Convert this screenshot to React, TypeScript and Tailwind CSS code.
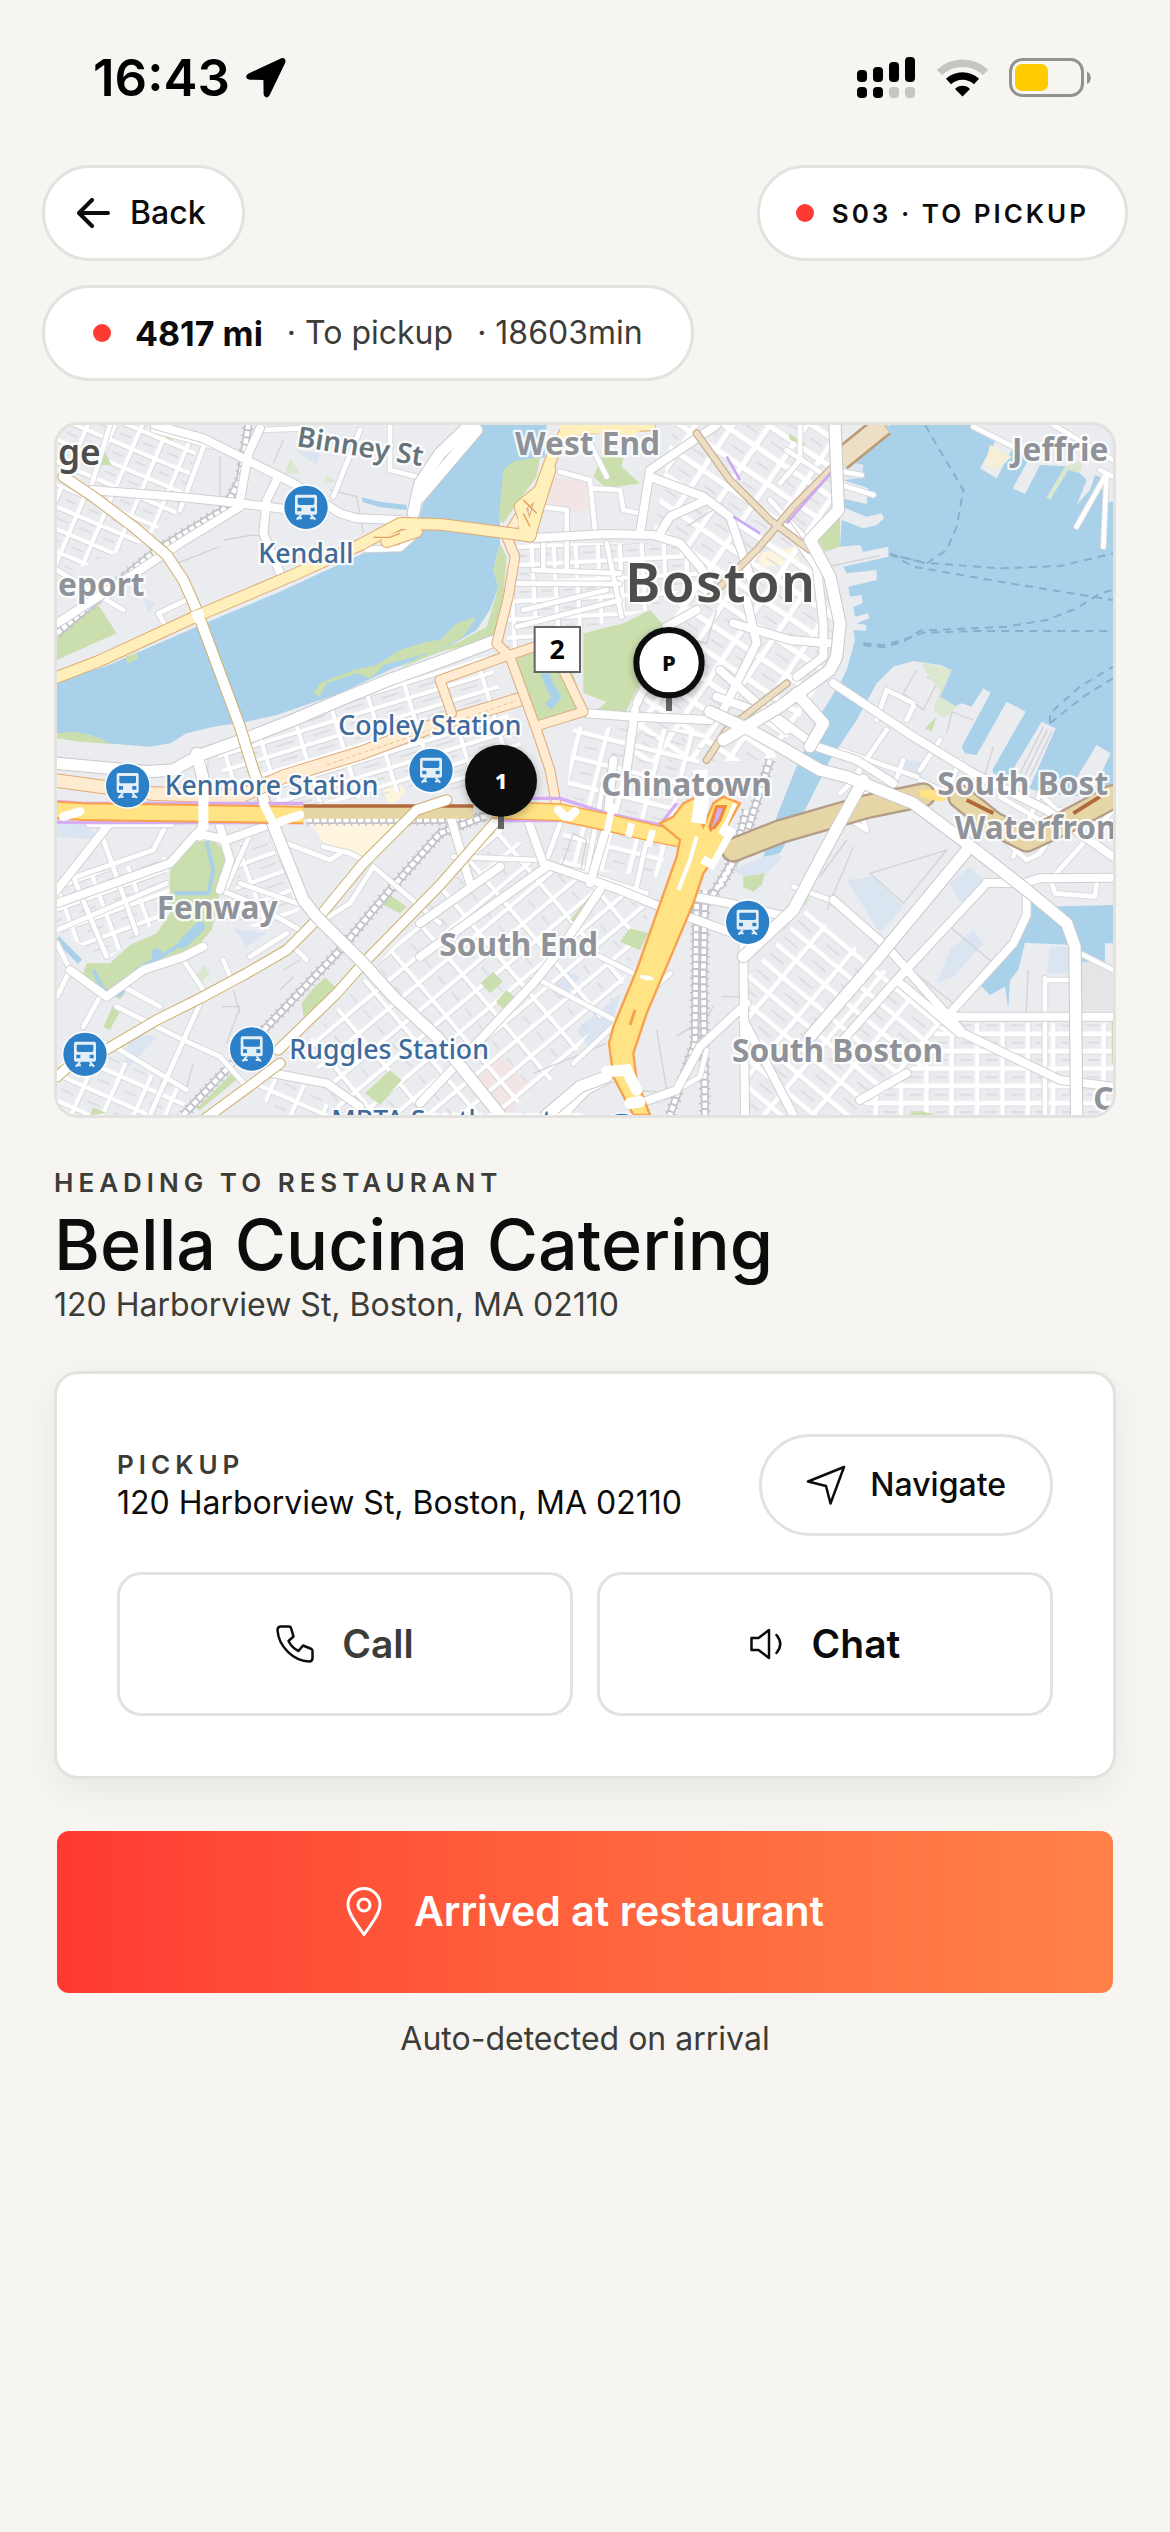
/**
 * Driver trip screen: heading to pickup
 *
 * Status bar, trip pills, live map, restaurant details
 * and the "arrived" action.
 */

import type { ReactNode } from 'react'

interface Label {
  text: string
  x: number
  y: number
  rotate?: number
}

interface RoadProps {
  paths: string[]
  width: number
  color: string
  casing?: string
  casingWidth?: number
}

const WATER = '#a9d1ea'
const PARK = '#cbdfae'
const BUILT = '#dae5f1'

/* ---------- Map data (map units, 3 per pixel) ---------- */

const water = [
  // Charles River
  'M51 815L110 795 200 768 470 650 720 545 970 430 1070 420 1120 385 1150 280 1200 210 1310 45H1520L1515 140 1400 180 1380 320 1380 400 1360 480 1375 530 1350 600 1310 660 1200 725 1060 775 900 850 710 915 620 935 520 950 440 970 390 1000 330 1010 200 1000 150 975 51 970Z',
  // Inner harbor and channel
  'M2550 45H3219V1165L3070 1155 2980 1140 2860 1090 2857 1080 2957 905 2900 875 2810 1035 2775 1030 2765 1010 2852 848 2830 835 2795 890 2765 880 2745 890 2700 860 2735 780 2700 765 2620 753 2560 770 2510 820 2450 930 2370 1050 2300 1190 2220 1330 2170 1340 2210 1220 2265 1080 2350 900 2400 820 2420 780 2445 690 2440 660 2478 662 2478 645 2450 640 2488 625 2485 610 2445 620 2440 590 2468 580 2465 555 2430 560 2425 530 2510 510 2510 480 2420 490 2410 470 2545 440 2545 410 2470 425 2460 405 2400 410 2405 330 2470 355 2510 345 2532 325 2525 310 2480 320 2405 290 2405 265 2480 282 2485 235 2410 210 2465 205 2470 165 2410 150Z',
  // Reserved Channel
  'M2955 1470L3010 1490 3219 1485V1600H3195V1655L3120 1655 3100 1605 2955 1598 2935 1680 2910 1710 2905 1795 2895 1730 2850 1755 2815 1720 2910 1600 2960 1515Z',
  'M870 1462L955 1368 978 1378 886 1474Z',
  'M965 262L1020 275 1100 285V300L1020 292 968 276Z',
  'M1950 1485L1968 1480 1960 1520 1940 1515Z',
]

const parks = [
  'M51 660L175 585 230 670 51 750Z',
  'M255 740L290 730 295 745 262 762Z',
  'M51 970L110 965 180 985 210 1002 120 995 51 985Z',
  'M1390 180L1420 155 1500 140 1490 200 1430 280 1390 340 1376 330Z',
  'M1380 400L1400 440 1390 560 1365 680 1310 700 1200 725 1080 775 1140 740 1250 700 1340 650 1355 600 1375 530 1360 480Z',
  'M820 850L840 820 940 780 1010 765 1080 720 1160 695 1200 690 1250 640 1310 620 1270 680 1200 720 1030 765 1010 790 990 805 950 790 860 820 840 858Z',
  'M1630 670L1750 640 1830 600 1880 655 1780 860 1755 910 1670 900 1700 875 1630 850Z',
  'M1425 740L1570 700 1635 900 1495 935Z',
  'M1690 130L1750 145 1745 170 1800 220 1700 235 1660 200Z',
  'M390 1430V1390L400 1350 460 1295 520 1290 555 1325 560 1380 540 1450 515 1560 470 1610 310 1680 240 1768 190 1745 130 1690 140 1660 210 1660 270 1605 350 1570 390 1510Z',
  'M220 1785L245 1795 210 1860 190 1850Z',
  'M855 1702L890 1735 790 1820 785 1780 815 1740Z',
  'M1050 1455L1100 1490 1080 1510 1020 1480Z',
  'M580 1985L595 2005 480 2100 470 2095Z',
  'M1050 1980L1085 2010 1020 2085 975 2050Z',
  'M1660 1445L1685 1460 1610 1540 1590 1530Z',
  'M1770 1555L1825 1570 1800 1620 1740 1595Z',
  'M1360 1685L1388 1715 1350 1750 1322 1720Z',
  'M1400 1740L1432 1768 1395 1803 1368 1775Z',
  'M2330 385L2400 320V410L2355 425Z',
  'M2655 955L2690 920 2675 965Z',
  'M2110 1400L2175 1390 2165 1425 2140 1445 2110 1430Z',
  'M345 50L400 85 395 92 340 65ZM195 125L215 165 180 165Z',
  'M2245 70L2290 95 2300 110 2250 90Z',
  'M3215 1815H3219V1960H3215Z',
  'M2600 2115L2640 2102 2690 2115Z',
  'M150 2115L160 2092 200 2110Z',
]

const paleParks = [
  'M2645 755L2735 780 2700 860 2750 890 2710 925 2680 900 2700 840 2660 790Z',
  'M3075 170L3130 150 3120 190 3085 180 3030 270 3020 262Z',
  'M750 145L780 190 735 190Z M860 195L888 215 850 220Z',
  'M490 1665L510 1690 485 1715 470 1695Z',
  'M2290 1445L2320 1445 2300 1485 2285 1490Z',
]

const builtBlocks = [
  'M765 120L840 130 830 165Z',
  'M310 565L345 580 325 610Z',
  'M2080 1380L2190 1330 2230 1340 2170 1400 2110 1400Z',
  'M2420 1410L2500 1400 2590 1490 2520 1570Z',
  'M2730 1420L2790 1370 2840 1420 2780 1500 2740 1440Z',
  'M2730 1620L2800 1560 2830 1600 2740 1700 2690 1720Z',
  'M580 1555L680 1570 620 1610Z',
  'M270 1870L350 1880 270 1970 250 1960Z',
  'M1610 1860L1740 1750 1720 1830 1650 1920Z',
  'M3030 1610L3090 1610V1690H3020Z',
  'M2410 140L2470 170 2455 210 2405 200Z',
  'M1570 1680L1620 1700 1570 1770 1540 1740Z',
  'M51 1240L130 1240 190 1290 51 1280Z',
  'M2600 1050L2660 1060 2640 1110 2590 1090Z',
]

const hospital = [
  'M1540 200L1650 220 1650 300 1600 305 1500 280Z',
  'M1760 1080L1860 1075 1840 1140 1770 1120Z',
  'M1370 1920L1470 2030 1410 2115 1290 2050Z',
]

const sand = [
  'M810 1240L870 1210 1110 1210 970 1340 920 1320 860 1310Z',
  'M1030 1140L1070 1115 1100 1145 1050 1190Z',
  'M2145 430L2270 410 2275 460 2170 470Z',
  'M2850 105L2915 140 2870 180 2835 165Z',
]

// Areas with a regular street grid; each one is filled with a rotated pattern
const gridAreas = [
  { fill: 'url(#grid-cambridge)', d: 'M51 45H345L480 80 420 300 320 380 150 240 51 170Z' },
  { fill: 'url(#grid-cambridge)', d: 'M51 220L160 270 320 390 100 480 51 470Z' },
  { fill: 'url(#grid-backbay)', d: 'M520 1000L1340 735 1400 900 1480 1100 1320 1150 1180 1130 640 1210 560 1120Z' },
  { fill: 'url(#grid-beacon)', d: 'M1420 400H1900L1980 500 1840 595 1620 660 1400 720Z' },
  { fill: 'url(#grid-downtown)', d: 'M1900 45H2380L2390 300 2310 390 2390 640 2350 800 2200 1050 1780 1060 1790 860 1880 650 1980 480 1840 380Z' },
  { fill: 'url(#grid-southend)', d: 'M1370 1250L1500 1340 1700 1430 1830 1500 1740 1740 1560 1990 1380 2115 900 2115 800 1900 1000 1680Z' },
  { fill: 'url(#grid-fens)', d: 'M51 1420L380 1340 390 1500 200 1650 51 1560Z' },
  { fill: 'url(#grid-fens)', d: 'M600 1300L740 1290 800 1480 700 1560 580 1540Z' },
  { fill: 'url(#grid-roxbury)', d: 'M51 1960L200 1930 440 2050 430 2115H51ZM640 2010L760 2000 900 2115H700Z' },
  { fill: 'url(#grid-southie)', d: 'M2120 1700L2300 1500 2740 1840 2640 1980 2430 2115H2130Z' },
  { fill: 'url(#grid-straight)', d: 'M2700 1840H3219V2115H2480V2040L2640 1960Z' },
  { fill: 'url(#grid-chinatown)', d: 'M1600 950L2000 960 1960 1130 1850 1400 1560 1370Z' },
]

const streets = [
  'M660 60L790 55M960 60L880 260M51 480L250 600M340 60L520 110M210 45L150 240M420 300L500 85',
  'M355 610L450 565M355 610L372 640M1050 45V180L1130 200',
  'M2280 45V150L2220 220M2240 120L2360 200M2190 270L2310 400',
  'M1700 200L1650 100 1560 90M1560 185L1650 210 1665 360M1500 290L1580 300V370M1660 235L1740 240 1750 300 1800 310',
  'M1480 480L1740 490M1420 520L1740 522M1510 400V480M1580 390V480M1700 400L1745 620M1450 600L1700 540M1430 650L1740 570',
  'M51 1560L380 1420M100 1400L200 1640M180 1260L290 1570M110 1400L340 1320 380 1240M51 1760L90 1680 51 1600',
  'M380 1240L460 1230M640 1250L560 1430M700 1290L780 1470M740 1300L870 1350 900 1330M850 1310L930 1330 970 1350',
  'M540 1440L640 1480 780 1560M600 1420L800 1490M630 1640L740 1570M550 1650L570 1700M130 1870L240 1920 440 2040M430 1650L490 1740',
  'M480 1780L330 2115M230 1790L430 1890 540 1940 620 2030M130 1850L180 1760M250 1730L360 1790',
  'M850 1530L930 1480 1000 1370M1000 1370L1200 1540M770 1620L800 1650',
  'M1240 1340L1500 1350M1560 1240L1520 1350M1690 1120L1640 1390M1830 1250L1780 1470M1600 1380L1820 1450',
  'M1600 1960L1890 1690M1480 1700L1760 1850M1580 1590L1780 1690M1860 2070L1980 2000 2000 1920',
  'M2400 1210L2480 1260 2460 1200M2500 1120L2360 1300M2260 1430L2370 1470 2540 1610',
  'M2540 960L2450 1090M2400 1150L2460 1090M2620 880L2540 840 2510 930M2620 890L2600 930M2700 990L2640 1080',
  'M2590 1050L2560 1130M2760 1050L2720 1150 2640 1110M2880 1160L3000 1230 3060 1200',
  'M2920 1340L3000 1150 3050 1200M3040 1400L3219 1200M2840 1240L2960 1350 3000 1330 3070 1220',
  'M3030 1400L3045 1450 3165 1460 3170 1420M3015 1710H3110M3015 1705V2115M3120 1630L3219 1680',
  'M2630 1100L2400 1020M2405 185L2465 195M2405 225L2500 255',
  'M3110 350L3200 190 3190 410M3180 180L3219 200M2800 50L2920 110M3040 45L3219 150',
]

const avenues = [
  'M345 45L490 85 620 150 760 220 900 310 950 325 1080 330',
  'M150 240L430 262 600 280 740 298',
  'M660 55L625 130 600 270',
  'M51 640L270 500 420 400 600 290',
  'M710 210L680 270 670 370 720 490',
  'M1470 385L1700 372 1840 375 1920 400 1980 470 2010 520',
  'M1800 370L1830 180 2030 45',
  'M1830 200L1990 260 2070 320 2110 440 2150 560',
  'M1860 370L1890 320 2000 270',
  'M1880 650L1970 600M1790 880L1880 700',
  'M1640 910L1780 920 2010 930',
  'M1760 1080L1785 900',
  'M2080 640L2250 690 2370 700',
  'M2040 780L2240 960',
  'M2120 570L2150 700 2050 900',
  'M2030 860L2220 930 2330 1010 2450 1050 2560 1120',
  'M2230 330L2330 470 2350 640 2350 740 2270 800',
  'M240 1200L51 1440',
  'M51 1480L390 1360 470 1270 560 1290 700 1240 840 1190',
  'M490 1040V1210L480 1280M540 1250L570 1350 540 1440',
  'M150 1240H390',
  'M1220 1180L1290 1420M1460 1220L1510 1360 1740 1440 1860 1490 2080 1570',
  'M1960 1460L2070 1480 2240 1520M2110 1610L2115 2115',
  'M1720 1050L1700 1250 1650 1420',
  'M90 1680L200 1760 310 1680 430 1640 490 1610',
  'M1140 2080L1480 1720 1560 1620 1680 1440',
  'M1140 1540L1380 1370M1140 1640L1520 1370',
  'M2380 820L2620 980 2800 1090 3020 1200 3219 1340',
  'M2220 1550L2280 1460 2350 1330 2470 1120',
  'M2840 1420L2570 1710 2400 1900',
  'M2960 1450L2960 1515 2920 1600 2720 1820H3219',
  'M2840 1418L2950 1420 3000 1405 3219 1403',
  'M2380 1470L2540 1610 2770 1870 3060 2010 3219 2030',
  'M2570 1710L2760 1870',
  'M1570 2115L1640 2040 1700 2010 1750 1985 1770 1985',
  'M1800 2080L1910 2040 1980 1910 2120 1780',
  'M2110 1830L2200 2000 2260 2115M2460 2070L2600 1990',
  'M700 1990L860 2020 960 2090',
]

const majors = [
  'M1120 310L1140 220 1200 130 1290 45',
  'M1140 260L1310 60',
  'M51 1060L320 1085 400 1080 480 1035 620 985 760 930 900 870 1060 805 1200 755 1370 690',
  'M470 1030L490 1110',
  'M2010 905L2130 960 2220 1010 2340 1080 2420 1100 2620 1180 2780 1300 2960 1440 3080 1540 3105 1610 3110 2115',
  'M2385 45L2395 300 2310 390 2370 500 2400 640 2390 740 2370 780 2220 890 2050 990',
  'M2270 850L2350 940 2310 1010',
  'M2790 1310L2500 1660 2310 1880',
  'M2470 1110L2350 1330 2260 1500 2110 1640',
  'M1700 2000L1620 2030 1520 2115',
]

const rails = [
  'M51 670L350 420 550 300 600 210 625 45',
  'M800 1230H1200L1340 1220',
  'M430 2115L700 1830 900 1620 1050 1440 1200 1270 1330 1220',
  'M1970 1460L1965 1900 1890 2115',
  'M1995 1440L1990 1700 1995 2115',
  'M2120 1200L2080 1350 2010 1470M2190 1050L2110 1300 2040 1430',
]

const ferries = [
  'M2655 45L2770 240 2750 350 2720 420 2660 460 2550 432',
  'M2550 432L2650 458 2880 475 3060 468 3219 430',
  'M2550 432L2620 470 2940 525 3219 570',
  'M2470 705L2530 712 2590 695 2640 662 2900 650 3020 630 3110 595 3180 550 3219 540',
  'M2470 700L2530 705 2590 690 2650 668 2800 663H3219',
  'M3030 940L3030 910 3120 830 3219 770M3030 940L3130 860 3219 805',
]

const districts: Label[] = [
  { text: 'West End', x: 1425, y: 134 },
  { text: 'Jeffrie', x: 2916, y: 152 },
  { text: 'eport', x: 54, y: 558 },
  { text: 'Chinatown', x: 1684, y: 1158 },
  { text: 'Fenway', x: 350, y: 1528 },
  { text: 'South End', x: 1198, y: 1638 },
  { text: 'South Boston', x: 2076, y: 1956 },
  { text: 'South Bost', x: 2692, y: 1154 },
  { text: 'Waterfron', x: 2744, y: 1288 },
  { text: 'C', x: 3160, y: 2100 },
]

const stationLabels: Label[] = [
  { text: 'Kendall', x: 655, y: 460 },
  { text: 'Copley Station', x: 895, y: 975 },
  { text: 'Kenmore Station', x: 374, y: 1156 },
  { text: 'Ruggles Station', x: 748, y: 1946 },
  { text: 'MBTA Southampton', x: 874, y: 2160 },
]

const stations = [
  [798, 292],
  [263, 1127],
  [1173, 1081],
  [135, 1933],
  [635, 1917],
  [2123, 1537],
  [1745, 2176],
]

/* ---------- Map pieces ---------- */

function Shapes({ paths, fill }: { paths: string[]; fill: string }) {
  return (
    <g fill={fill}>
      {paths.map((d) => (
        <path key={d} d={d} />
      ))}
    </g>
  )
}

/** Draws the casing of every road first so that junctions stay open */
function Roads({ paths, width, color, casing, casingWidth = 6 }: RoadProps) {
  return (
    <g fill="none" strokeLinejoin="round" strokeLinecap="round">
      {casing &&
        paths.map((d) => <path key={`c${d}`} d={d} stroke={casing} strokeWidth={width + casingWidth} />)}
      {paths.map((d) => (
        <path key={d} d={d} stroke={color} strokeWidth={width} />
      ))}
    </g>
  )
}

function GridPattern({ id, w, h, angle, line = 13 }: { id: string; w: number; h: number; angle: number; line?: number }) {
  return (
    <pattern id={id} width={w} height={h} patternUnits="userSpaceOnUse" patternTransform={`rotate(${angle})`}>
      <path d={`M${w / 3} ${h / 2}H${w * 0.8}`} stroke="#d6d7da" strokeWidth="4" />
      <path d={`M0 0H${w}M0 0V${h}`} stroke="#d3d4d7" strokeWidth={line * 2 + 5} />
      <path d={`M0 0H${w}M0 0V${h}M0 ${h}H${w}M${w} 0V${h}`} stroke="#fff" strokeWidth={line * 2} />
    </pattern>
  )
}

function MapLabels({ labels, size, weight, color, spacing }: { labels: Label[]; size: number; weight: number; color: string; spacing?: number }) {
  return (
    <g
      fontFamily="'Noto Sans', sans-serif"
      fontSize={size}
      fontWeight={weight}
      fill={color}
      stroke="#fff"
      strokeOpacity="0.85"
      strokeWidth="14"
      strokeLinejoin="round"
      paintOrder="stroke"
      letterSpacing={spacing}
    >
      {labels.map(({ text, x, y, rotate = 0 }) => (
        <text key={`${text}${x}`} x={x} y={y} transform={`rotate(${rotate} ${x} ${y})`}>
          {text}
        </text>
      ))}
    </g>
  )
}

function Station({ x, y }: { x: number; y: number }) {
  return (
    <g transform={`translate(${x} ${y})`}>
      <circle r="70" fill="#fff" fillOpacity="0.8" />
      <circle r="65" fill="#2b80c8" />
      <path
        fillRule="evenodd"
        fill="#e4eff8"
        d="M-28-38H28Q33-38 33-32V16Q33 22 27 22H-27Q-33 22-33 16V-32Q-33-38-28-38ZM-25-29V-12Q-25-7-20-7H20Q25-7 25-12V-29ZM-26 1V12H-14V1ZM14 1V12H26V1Z"
      />
      <path d="M-14 22L-28 37M14 22L28 37M-24 33H-12M12 33H24" stroke="#e4eff8" strokeWidth="6" />
    </g>
  )
}

function TripMap() {
  return (
    <svg
      viewBox="51 45 3168 2070"
      preserveAspectRatio="xMidYMid slice"
      className="block w-full"
      role="img"
      aria-label="Map of Boston"
    >
      <defs>
        <GridPattern id="grid-cambridge" w={75} h={62} angle={23} line={6} />
        <GridPattern id="grid-backbay" w={115} h={46} angle={-17} line={6} />
        <GridPattern id="grid-beacon" w={66} h={54} angle={-3} line={6} />
        <GridPattern id="grid-downtown" w={92} h={74} angle={34} line={8} />
        <GridPattern id="grid-southend" w={64} h={118} angle={50} line={6} />
        <GridPattern id="grid-fens" w={110} h={62} angle={-20} line={6} />
        <GridPattern id="grid-roxbury" w={86} h={72} angle={24} line={6} />
        <GridPattern id="grid-southie" w={112} h={64} angle={40} line={7} />
        <GridPattern id="grid-straight" w={76} h={52} angle={0} line={7} />
        <GridPattern id="grid-chinatown" w={82} h={78} angle={14} line={7} />
        <filter id="pin-shadow" x="-50%" y="-50%" width="200%" height="200%">
          <feDropShadow dx="0" dy="8" stdDeviation="12" floodOpacity="0.3" />
        </filter>
      </defs>

      <rect x="51" y="45" width="3168" height="2070" fill="#ebecf0" />
      <Shapes paths={builtBlocks} fill={BUILT} />
      <Shapes paths={sand} fill="#fdf5dd" />
      <Shapes paths={hospital} fill="#f2e5e5" />
      {gridAreas.map(({ fill, d }) => (
        <path key={d} d={d} fill={fill} />
      ))}

      <Shapes paths={water} fill={WATER} />
      <path d="M3120 1655L3219 1660V1800H3120Z" fill="#e4e5e7" />

      {/* East Boston shore and the piers */}
      <g fill="#ebecf0">
        <path d="M2795 45H3219V275H3195L3180 200 3165 195 3150 240 3110 285 3140 210 3100 170 3000 165 2955 252 2918 235 2965 150 2920 110 2870 205 2820 175 2868 90Z" />
        <path d="M3005 935L3047 955 2970 1130 2900 1110Z" />
        <path d="M3170 1005L3212 1030 3160 1140 3100 1120Z" />
      </g>
      <g fill="none" stroke="#d2d3d6" strokeWidth="4">
        <path d="M3010 950L2940 1090M3035 965L2970 1100M3022 958L2955 1095M2375 468L2520 437M2860 1010L2830 1110" />
        <path d="M2630 780L2590 850 2650 900 2700 800M2660 800L2720 830M2720 900L2800 930M2740 890L2720 970" />
        <path d="M2490 1390L2720 1320 2590 1480ZM2440 1310L2360 1500M2420 1290L2340 1400M2730 1550L2860 1660M2550 1630L2740 1780" />
        <path d="M1910 1880L2000 1820 2020 1790M1850 1860L1880 2040M1780 2040L1850 2045M2965 1680L2958 1810M2045 1760H2100V1800" />
        <path d="M550 390L640 375 670 380M410 460L540 410M870 240L950 260 970 370M540 140V260M700 160L730 90" />
        <path d="M600 1810L580 1740M545 1790L600 1790 560 1900M380 2010L440 2030 460 1960M730 1680L780 1650M720 1740L760 1700" />
        <path d="M1600 1270L1640 1290 1620 1390 1560 1380ZM1480 1990L1700 1900M1940 350L2050 280M2030 600L2000 700 1930 680" />
      </g>

      <Shapes paths={parks} fill={PARK} />
      <Shapes paths={paleParks} fill="#dbe8cf" />
      <Shapes paths={sand.slice(3)} fill="#f6efd8" />
      <g fill="none" stroke={WATER} strokeWidth="12" strokeLinejoin="round">
        <path d="M500 1295L520 1380 505 1450 400 1450M480 1540L460 1580 360 1640 290 1680 240 1755 190 1740 160 1680" />
        <path d="M51 1585L120 1655" strokeWidth="18" />
        <path d="M1515 790L1530 830 1550 860 1525 890" strokeWidth="26" />
        <path d="M430 1600L480 1550M350 1630V1640" strokeWidth="30" strokeLinecap="round" />
      </g>

      <g fill="none" stroke="#82b2ca" strokeWidth="6" strokeDasharray="24 18">
        {ferries.map((d) => (
          <path key={d} d={d} />
        ))}
      </g>

      {/* Rail lines with sleepers */}
      <g fill="none">
        {rails.map((d) => (
          <g key={d}>
            <path d={d} stroke="#c3c3c8" strokeWidth="34" strokeDasharray="5 17" />
            <path d={d} stroke="#c3c3c8" strokeWidth="24" />
            <path d={d} stroke="#fff" strokeWidth="14" strokeDasharray="16 6" />
          </g>
        ))}
      </g>

      <Roads paths={streets} width={14} color="#fff" casing="#d9dadd" />
      <Roads paths={avenues} width={24} color="#fff" casing="#cfd0d3" />

      {/* Tunnels */}
      <Roads
        paths={['M2080 1320L2220 1265 2480 1190 2650 1155', 'M2760 1160L2860 1240 2960 1290 3070 1240 3219 1160']}
        width={62}
        color="#e6d6a6"
        casing="#b39c88"
        casingWidth={14}
      />
      <Roads
        paths={['M2010 560L2150 420 2260 290 2400 150 2530 45', 'M1970 70L2070 210 2190 330 2310 420', 'M2000 1050L2060 960 2240 820']}
        width={16}
        color="#ecdfc6"
        casing="#c9b394"
        casingWidth={8}
      />
      <path d="M2400 150L2530 45" stroke="#bc9b73" strokeWidth="72" />
      <path d="M2400 150L2530 45" stroke="#ecdfc6" strokeWidth="56" />
      <path d="M2060 140L2100 210M2080 320L2160 370M2240 340L2380 180" stroke="#cda8f5" strokeWidth="8" />
      <path d="M790 1208H1300" stroke="#e6d6a6" strokeWidth="36" />
      <path d="M790 1188H1300" stroke="#b06a3e" strokeWidth="10" />

      <Roads paths={majors} width={34} color="#fff" casing="#c8c9cc" />

      {/* Massachusetts, Huntington and Columbus avenues */}
      <Roads
        paths={['M70 200L160 260 280 350 380 435 430 510 470 600 600 950 640 1080 690 1220']}
        width={30}
        color="#fff"
        casing="#cdb06a"
      />
      <Roads
        paths={[
          'M180 1930L350 1830 480 1765 620 1690 740 1620 830 1530 970 1360 1130 1200 1220 1170',
          'M490 2130L620 2035 720 1960',
          'M715 1920L890 1750 970 1660 1200 1425 1380 1220',
          'M51 2000L90 1965',
        ]}
        width={28}
        color="#fff"
        casing="#cdb06a"
      />
      <Roads
        paths={['M690 1220L790 1470 830 1520 970 1660 1060 1760 1190 1880 1380 2115']}
        width={34}
        color="#fff"
        casing="#c8c9cc"
      />

      {/* Commonwealth Avenue and the Public Garden loop */}
      <Roads
        paths={['M51 1112L330 1150 600 1160 730 1100 960 1030 1200 940 1450 865']}
        width={38}
        color="#feebd0"
        casing="#dfaa78"
      />
      <path d="M860 1065L1430 872" stroke="#e9c59a" strokeWidth="3" strokeDasharray="12 8" />
      <Roads
        paths={[
          'M1400 380L1425 440 1405 560 1370 700 1410 740 1490 960 1530 1080 1550 1190',
          'M1200 810L1380 745 1500 705 1570 690',
          'M1200 810L1235 910',
          'M1570 780L1630 905 1500 945',
          'M1450 300L1400 380',
        ]}
        width={26}
        color="#feebd0"
        casing="#dfaa78"
      />

      {/* Memorial Drive, Longfellow Bridge, Storrow ramps */}
      <Roads paths={['M980 418L1080 415 1120 380 1140 350']} width={18} color="#fff" casing="#cfd0d3" />
      <Roads
        paths={[
          'M30 810L180 752 470 618 760 495 960 405 1080 340 1200 343 1470 378',
          'M1470 378L1440 290 1500 240 1540 130 1580 60 1700 50 1830 45',
          'M1470 378L1495 290 1530 180',
          'M1040 395L1130 365',
        ]}
        width={32}
        color="#ffefba"
        casing="#dfaa70"
      />
      <path d="M1560 45H1830L1780 75 1640 70 1560 90Z" fill="#ffefba" />
      <path d="M1430 280L1480 370 1440 380Z" fill="#ffefba" />
      <path d="M1450 270L1490 310M1450 310L1470 350M1000 382H1050L1080 370" stroke="#dd9f62" strokeWidth="4" fill="none" />
      <path d="M455 615L490 605M462 632L492 622" stroke="#fff" strokeWidth="18" />

      {/* Mass Pike */}
      <g fill="none" strokeLinejoin="round">
        <path d="M51 1174L130 1180H790M51 1236L130 1238H790M1400 1165H1560L1700 1210 1860 1245 1910 1180M1380 1232H1560" stroke="#d5adf5" strokeWidth="10" />
        <path d="M51 1200L130 1205 790 1215" stroke="#fba14b" strokeWidth="56" />
        <path d="M1360 1200L1560 1207 1700 1237 1850 1272 1940 1290" stroke="#fba14b" strokeWidth="54" />
        <path d="M51 1200L130 1205 790 1215" stroke="#ffe384" strokeWidth="44" />
        <path d="M1360 1200L1560 1207 1700 1237 1850 1272 1940 1290" stroke="#ffe384" strokeWidth="46" />
        <path d="M70 1220L120 1204M670 1180L700 1240M720 1235L780 1215M1555 1200L1575 1220M1590 1220L1605 1205" stroke="#fff" strokeWidth="26" strokeLinecap="round" />
        <path d="M490 1140V1250" stroke="#fff" strokeWidth="30" strokeLinecap="round" />
        <path d="M1718 1180L1700 1270M1775 1240L1765 1280M1838 1260L1825 1310" stroke="#fff" strokeWidth="20" />
      </g>

      {/* I-93 */}
      <path
        d="M1860 1240L1900 1220 1930 1180 1970 1160 1965 1200 1990 1250 2020 1180 2050 1160 2100 1180 2060 1250 2040 1320 1990 1390 1960 1480 1820 1810 1780 1930 1790 2010 1830 2115H1780L1720 2000 1707 1900 1720 1850 1790 1680 1910 1340 1920 1290Z"
        fill="#ffe384"
        stroke="#f8a04c"
        strokeWidth="7"
      />
      <path d="M2010 1250L2030 1190 2055 1190 2040 1230 2015 1262Z" fill="#d5adf5" stroke="#f08a3c" strokeWidth="10" />
      <path d="M1980 1080L1985 1170 1975 1240M2070 1250L2000 1370" fill="none" stroke="#fff" strokeWidth="44" />
      <path d="M2085 1180L2050 1260 2000 1340M1970 1280L1950 1350 1915 1440" fill="none" stroke="#fff" strokeWidth="12" />
      <path d="M2010 1270L2030 1285 2000 1340" fill="none" stroke="#ffe384" strokeWidth="34" />
      <path d="M1800 1700L1830 1702M1810 1706L1840 1705" stroke="#fff" strokeWidth="10" />
      <path d="M1785 1800L1770 1845" stroke="#f8a04c" strokeWidth="9" />
      <path d="M1700 1985L1760 1980 1790 2040M1770 2080L1800 2075" fill="none" stroke="#fff" strokeWidth="34" strokeLinecap="round" />
      <path d="M2640 1140L2700 1140 2720 1170 2700 1175 2640 1160Z" fill="#ffe384" />
      <path d="M2780 1170L2860 1210M3100 1210L3180 1160" stroke="#b06a3e" strokeWidth="12" />

      {/* Labels */}
      <MapLabels labels={[{ text: 'ge', x: 54, y: 165 }]} size={106} weight={600} color="#4d4d4d" />
      <MapLabels labels={[{ text: 'Binney St', x: 768, y: 108, rotate: 9 }]} size={84} weight={600} color="#66757a" />
      <MapLabels labels={districts} size={95} weight={700} color="#8f9399" />
      <MapLabels labels={[{ text: 'Boston', x: 1756, y: 577 }]} size={160} weight={600} color="#4d4d4d" spacing={4} />
      {stations.map(([x, y]) => (
        <Station key={`${x}-${y}`} x={x} y={y} />
      ))}
      <MapLabels labels={stationLabels} size={80} weight={500} color="#3f6a9c" />

      {/* Route badge */}
      <rect x="1484" y="651" width="136" height="135" fill="#fff" stroke="#636363" strokeWidth="6" />
      <text x="1551" y="748" textAnchor="middle" fontFamily="'Noto Sans', sans-serif" fontSize="80" fontWeight="700">
        2
      </text>

      {/* Pickup and driver pins */}
      <g fontFamily="'Noto Sans', sans-serif" fontSize="66" fontWeight="800" textAnchor="middle">
        <path d="M1887 860V903" stroke="#666" strokeWidth="18" />
        <circle cx="1887" cy="758" r="98" fill="#fff" stroke="#0c0c0c" strokeWidth="18" filter="url(#pin-shadow)" />
        <text x="1887" y="782" fill="#0c0c0c">P</text>
        <path d="M1383 1215V1257" stroke="#666" strokeWidth="18" />
        <circle cx="1383" cy="1112" r="108" fill="#0c0c0c" filter="url(#pin-shadow)" />
        <text x="1383" y="1137" fill="#fff">1</text>
      </g>
    </svg>
  )
}

/* ---------- Screen ---------- */

function StatusBar() {
  return (
    <div className="flex items-center justify-between pt-12 pr-[78px] pb-[57px] pl-[93px] text-black">
      <div className="flex items-center gap-4">
        <span className="text-[51px] leading-[60px] font-semibold">16:43</span>
        <svg width="40" height="40" viewBox="0 0 40 40" aria-hidden="true">
          <path d="M34.8.4L2.6 15.6C-1.2 17.5-.3 21.6 3.8 21.7L17.4 21.9 17.6 35.6C17.7 40 21.9 40.7 23.7 37L39 5.2C40.6 1.7 38.2-1.1 34.8.4Z" />
        </svg>
      </div>
      <div className="flex items-center gap-[21px]">
        <svg width="59" height="42" viewBox="0 0 59 42" aria-hidden="true">
          <rect x="0" y="13" width="10" height="12" rx="4" />
          <rect x="16" y="10" width="10" height="15" rx="4" />
          <rect x="32" y="5" width="10" height="20" rx="4" />
          <rect x="48" y="0" width="10" height="25" rx="4" />
          <rect x="0" y="30" width="10" height="11" rx="4" />
          <rect x="16" y="30" width="10" height="11" rx="4" />
          <rect x="32" y="30" width="10" height="11" rx="4" fill="#c6c6c1" />
          <rect x="48" y="30" width="10" height="11" rx="4" fill="#c6c6c1" />
        </svg>
        <svg width="51" height="38" viewBox="0 0 51 38" fill="none" aria-hidden="true">
          <path d="M2.5 13.5A33 33 0 0 1 48.5 13.5" stroke="#c6c6c1" strokeWidth="7.5" />
          <path d="M11.5 22.5A20.5 20.5 0 0 1 39.5 22.5" stroke="#000" strokeWidth="7.5" />
          <path d="M25.5 37.5L18 30A10.5 10.5 0 0 1 33 30Z" fill="#000" />
        </svg>
        <svg width="83" height="40" viewBox="0 0 83 40" aria-hidden="true">
          <rect x="1.5" y="1.5" width="72" height="36" rx="12" fill="none" stroke="#929290" strokeWidth="3" />
          <rect x="6" y="6" width="33" height="27" rx="7" fill="#fecb03" />
          <path d="M78 13.5C83 15 83 24.5 78 26Z" fill="#929290" />
        </svg>
      </div>
    </div>
  )
}

function Dot() {
  return <span className="size-[18px] shrink-0 rounded-full bg-[#ff3a33]" />
}

function ContactButton({ icon, children, className }: { icon: ReactNode; children: ReactNode; className: string }) {
  return (
    <button
      type="button"
      className={`flex h-36 items-center justify-center gap-7 rounded-3xl border-3 border-[#e2e2de] text-[39px] font-semibold ${className}`}
    >
      {icon}
      {children}
    </button>
  )
}

export default function App() {
  return (
    <div className="min-h-screen bg-[#f6f5f1] font-['Inter',sans-serif] text-[#0c0c0c]">
      <StatusBar />

      <header className="flex flex-col items-start gap-6 px-[42px]">
        <div className="flex w-full items-center justify-between">
          <button
            type="button"
            className="flex h-24 items-center gap-5 rounded-full border-3 border-[#e2e2de] bg-white pr-9 pl-8 text-[32px] font-medium"
          >
            <svg width="33" height="30" viewBox="0 0 33 30" fill="none" stroke="currentColor" strokeWidth="4" strokeLinecap="round" strokeLinejoin="round" aria-hidden="true">
              <path d="M31 15H2M15 2L2 15 15 28" />
            </svg>
            Back
          </button>
          <div className="flex h-24 items-center gap-[18px] rounded-full border-3 border-[#e2e2de] bg-white px-9 text-[26px] font-semibold tracking-[3px]">
            <Dot />
            S03 · TO PICKUP
          </div>
        </div>
        <div className="flex h-24 items-center gap-6 rounded-full border-3 border-[#e2e2de] bg-white px-12 text-[32px] text-[#3c3c38]">
          <Dot />
          <strong className="text-[34px] font-bold text-[#0c0c0c]">4817 mi</strong>
          <span>· To pickup</span>
          <span>· 18603min</span>
        </div>
      </header>

      <main className="px-[54px] pt-[41px]">
        <div className="overflow-hidden rounded-3xl border-3 border-[#e2e2de]">
          <TripMap />
        </div>

        <p className="mt-[47px] text-[26px] leading-9 font-semibold tracking-[5px] text-[#3c3c38]">
          HEADING TO RESTAURANT
        </p>
        <h1 className="mt-2 text-[70px] leading-[72px] font-medium">Bella Cucina Catering</h1>
        <p className="mt-1 text-[32px] leading-10 text-[#3c3c38]">120 Harborview St, Boston, MA 02110</p>

        <section className="mt-[46px] rounded-3xl border-3 border-[#e2e2de] bg-white p-[60px] shadow-[0_12px_36px_rgba(12,12,12,0.06)]">
          <div className="flex items-center justify-between">
            <div>
              <h2 className="text-[26px] leading-9 font-semibold tracking-[5px] text-[#3c3c38]">PICKUP</h2>
              <p className="text-[32px] leading-10">120 Harborview St, Boston, MA 02110</p>
            </div>
            <button
              type="button"
              className="flex h-[102px] items-center gap-6 rounded-full border-3 border-[#e2e2de] px-11 text-[32px] font-medium"
            >
              <svg width="40" height="40" viewBox="0 0 40 40" fill="none" stroke="currentColor" strokeWidth="2.5" strokeLinejoin="round" aria-hidden="true">
                <path d="M38 2L2 16.5 20 21 24.5 38.5Z" />
              </svg>
              Navigate
            </button>
          </div>
          <div className="mt-9 grid grid-cols-2 gap-6">
            <ContactButton
              className="text-[#3c3c38]"
              icon={
                <svg width="38" height="38" viewBox="0 0 38 38" fill="none" stroke="#0c0c0c" strokeWidth="2.5" strokeLinejoin="round" aria-hidden="true">
                  <path d="M4.5 1.5H13Q14.5 1.5 15 3L17.5 11.5 12.5 16Q16 23 22.5 26L27 20.5 35.5 24Q36.5 24.5 36.5 26V33Q36.5 36.5 33 36.5C17 35.5 2.5 21.5 1.5 5Q1.5 2 4.5 1.5Z" />
                </svg>
              }
            >
              Call
            </ContactButton>
            <ContactButton
              className="text-[#0c0c0c]"
              icon={
                <svg width="34" height="32" viewBox="0 0 34 32" fill="none" stroke="#0c0c0c" strokeWidth="2.5" strokeLinejoin="round" strokeLinecap="round" aria-hidden="true">
                  <path d="M1.5 10H8.5L19 2V30L8.5 22H1.5ZM26.5 7Q34 16 26.5 25" />
                </svg>
              }
            >
              Chat
            </ContactButton>
          </div>
        </section>

        <div className="px-[3px] pt-[52px]">
          <button
            type="button"
            className="flex h-[162px] w-full items-center justify-center gap-8 rounded-xl bg-linear-to-r from-[#ff3932] to-[#ff8248] text-[41px] font-semibold text-white"
          >
            <svg width="36" height="50" viewBox="0 0 36 50" fill="none" stroke="currentColor" strokeWidth="3" strokeLinejoin="round" aria-hidden="true">
              <path d="M18 47.5C10 36 2 26 2 17.5A16 16 0 0 1 34 17.5C34 26 26 36 18 47.5Z" />
              <circle cx="18" cy="18" r="6" />
            </svg>
            Arrived at restaurant
          </button>
        </div>
        <p className="mt-[26px] pb-16 text-center text-[32px] leading-10 text-[#3c3c38]">Auto-detected on arrival</p>
      </main>
    </div>
  )
}
